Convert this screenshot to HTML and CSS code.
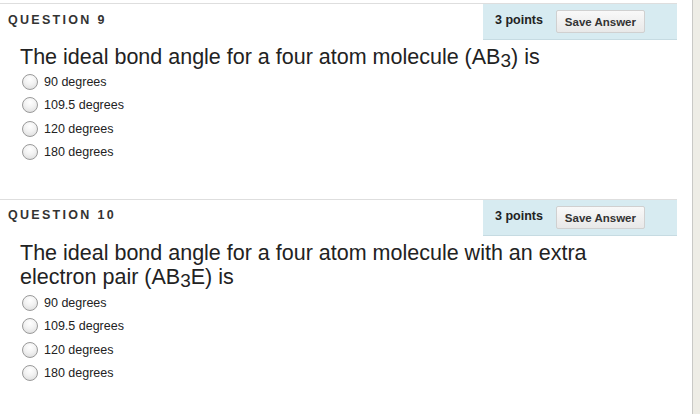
FILE: index.html
```html
<!DOCTYPE html>
<html>
<head>
<meta charset="utf-8">
<link rel="stylesheet" href="styles.css">
</head>
<body>
<div class="page">
  <div class="content">
    <section class="question q9">
      <div class="qhead">
        <div class="qlabel">QUESTION 9</div>
        <div class="qmeta">
          <span class="points">3 points</span>
          <button class="save">Save Answer</button>
        </div>
      </div>
      <div class="qtext">The ideal bond angle for a four atom molecule (AB<sub>3</sub>) is</div>
      <ul class="options">
        <li><span class="radio"></span>90 degrees</li>
        <li><span class="radio"></span>109.5 degrees</li>
        <li><span class="radio"></span>120 degrees</li>
        <li><span class="radio"></span>180 degrees</li>
      </ul>
    </section>
    <section class="question q10">
      <div class="qhead">
        <div class="qlabel">QUESTION 10</div>
        <div class="qmeta">
          <span class="points">3 points</span>
          <button class="save">Save Answer</button>
        </div>
      </div>
      <div class="qtext">The ideal bond angle for a four atom molecule with an extra<br>electron pair (AB<sub>3</sub>E) is</div>
      <ul class="options">
        <li><span class="radio"></span>90 degrees</li>
        <li><span class="radio"></span>109.5 degrees</li>
        <li><span class="radio"></span>120 degrees</li>
        <li><span class="radio"></span>180 degrees</li>
      </ul>
    </section>
  </div>
  <div class="scroll"></div>
</div>
</body>
</html>
```
FILE: styles.css
```css
html, body {
  margin: 0;
  padding: 0;
  background: #ffffff;
}
body {
  font-family: "Liberation Sans", Arial, sans-serif;
  color: #222;
}
.page {
  display: flex;
  width: 700px;
  height: 414px;
  overflow: hidden;
}
.content {
  flex: 1;
  padding-top: 3px;
}
.scroll {
  width: 7px;
  border-left: 1px solid #c9c9c6;
  background: #eeede6;
}
.question {
  margin-right: 15px;
  border-top: 1px solid #dedede;
}
.q10 {
  margin-top: 35px;
}
.qhead {
  display: flex;
  justify-content: space-between;
  align-items: flex-start;
  height: 36px;
}
.qlabel {
  padding: 9px 0 0 8px;
  font-size: 12.5px;
  font-weight: bold;
  letter-spacing: 2.3px;
  color: #333;
  line-height: 14px;
}
.q10 .qlabel {
  padding-top: 8px;
}
.qmeta {
  width: 194px;
  height: 36px;
  box-sizing: border-box;
  background: #d7ebf1;
  border-bottom: 1px solid #c6dbe2;
  display: flex;
  align-items: center;
  padding-left: 12px;
  gap: 13px;
}
.points {
  font-size: 12.5px;
  font-weight: bold;
  color: #222;
  margin-top: -3px;
}
.save {
  font-family: "Liberation Sans", Arial, sans-serif;
  font-size: 11.5px;
  font-weight: bold;
  color: #333;
  width: 89px;
  height: 23px;
  padding: 0;
  border: 1px solid #d0d0d0;
  border-radius: 2px;
  background: linear-gradient(#f9f9f9, #e8e8e8);
}
.qtext {
  margin: 5px 0 0 20px;
  font-size: 21.5px;
  line-height: 24px;
  color: #222;
}
.q10 .qtext {
  margin-top: 5px;
}
.qtext sub {
  font-size: 19px;
  vertical-align: -3px;
  line-height: 0;
}
.options {
  list-style: none;
  margin: 1px 0 0 0;
  padding: 0 0 0 22px;
}
.q10 .options {
  margin-top: 2px;
}
.options li {
  display: flex;
  align-items: center;
  height: 23.5px;
  font-size: 12.5px;
  color: #222;
}
.radio {
  width: 14px;
  height: 14px;
  border: 1px solid #9a9a9a;
  border-radius: 50%;
  background: radial-gradient(circle at 50% 30%, #ffffff 0%, #f2f2f2 45%, #d8d8d8 100%);
  margin-right: 6px;
  flex: none;
}
```
